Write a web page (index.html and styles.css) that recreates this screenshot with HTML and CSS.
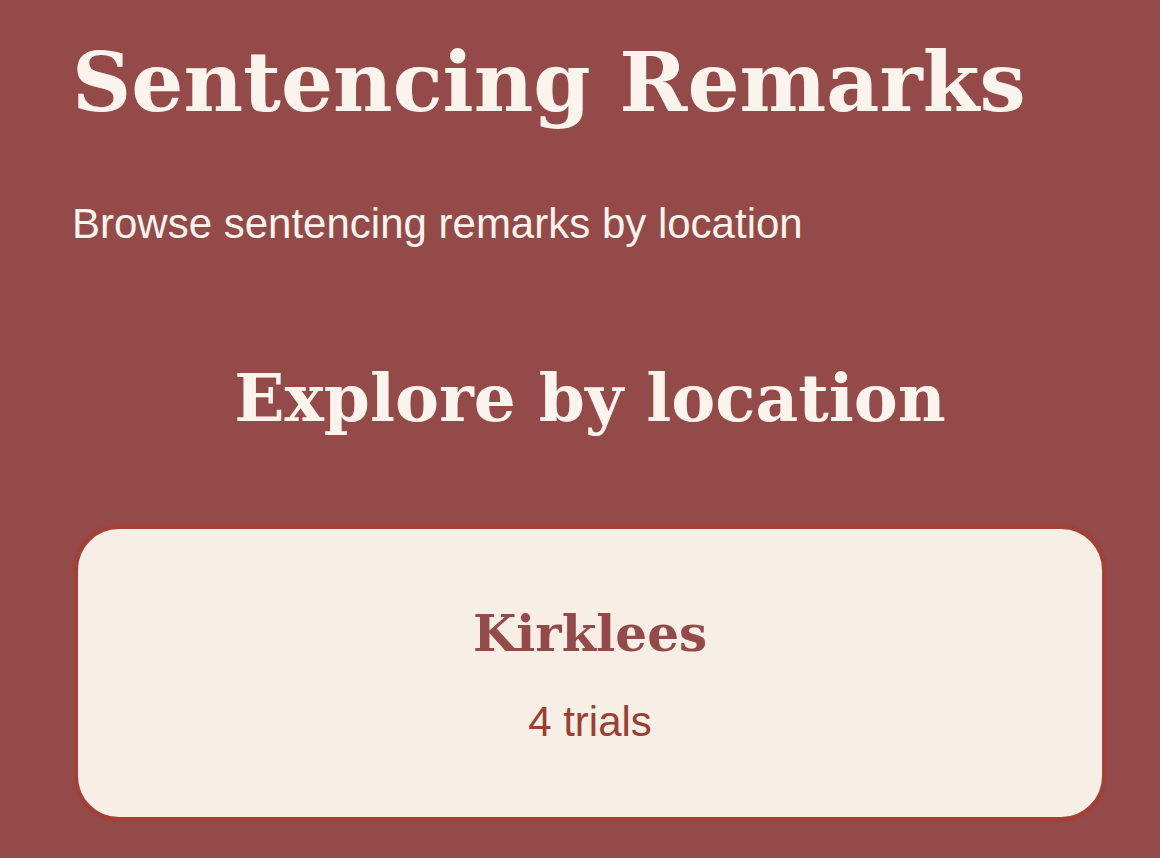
FILE: index.html
```html
<!DOCTYPE html>
<html>
<head>
  <title>Sentencing Remarks</title>
  <link rel="stylesheet" href="styles.css">
</head>
<body>
  <div class="page">
    <header class="masthead">
      <h1>Sentencing Remarks</h1>
      <p class="tagline">Browse sentencing remarks by location</p>
    </header>

    <section class="locations">
      <h2>Explore by location</h2>
      <div class="location-list">
        <a class="location-card" href="#kirklees">
          <h3>Kirklees</h3>
          <div class="count">4 trials</div>
        </a>
      </div>
    </section>
  </div>
</body>
</html>
```

FILE: styles.css
```css
body {
  margin: 0;
  padding: 0;
  background: #944a49;
  color: #fbf4ec;
  font-family: "Liberation Sans", Arial, sans-serif;
}

.page {
  padding: 0 53px 0 73px;
}

h1, h2, h3 {
  font-family: "DejaVu Serif", Georgia, serif;
  font-weight: bold;
  margin: 0;
}

.masthead h1 {
  font-size: 82px;
  line-height: 1.2;
  padding-top: 33px;
  margin-left: -1px;
}

.tagline {
  font-size: 42px;
  line-height: 1.2;
  margin: 68px 0 0 -1px;
}

.locations h2 {
  font-size: 66px;
  line-height: 1.2;
  text-align: center;
  margin-top: 109px;
}

.location-list {
  margin-top: 86px;
}

.location-card {
  display: flex;
  flex-direction: column;
  align-items: center;
  height: 288px;
  padding-top: 0;
  background: #f7efe5;
  border: 5px solid #a0423a;
  border-radius: 46px;
  text-decoration: none;
}

.location-card h3 {
  font-size: 50px;
  line-height: 1.2;
  color: #944a49;
  margin-top: 75px;
}

.location-card .count {
  font-size: 42px;
  line-height: 1.2;
  color: #9b3f33;
  margin-top: 33px;
}
```
